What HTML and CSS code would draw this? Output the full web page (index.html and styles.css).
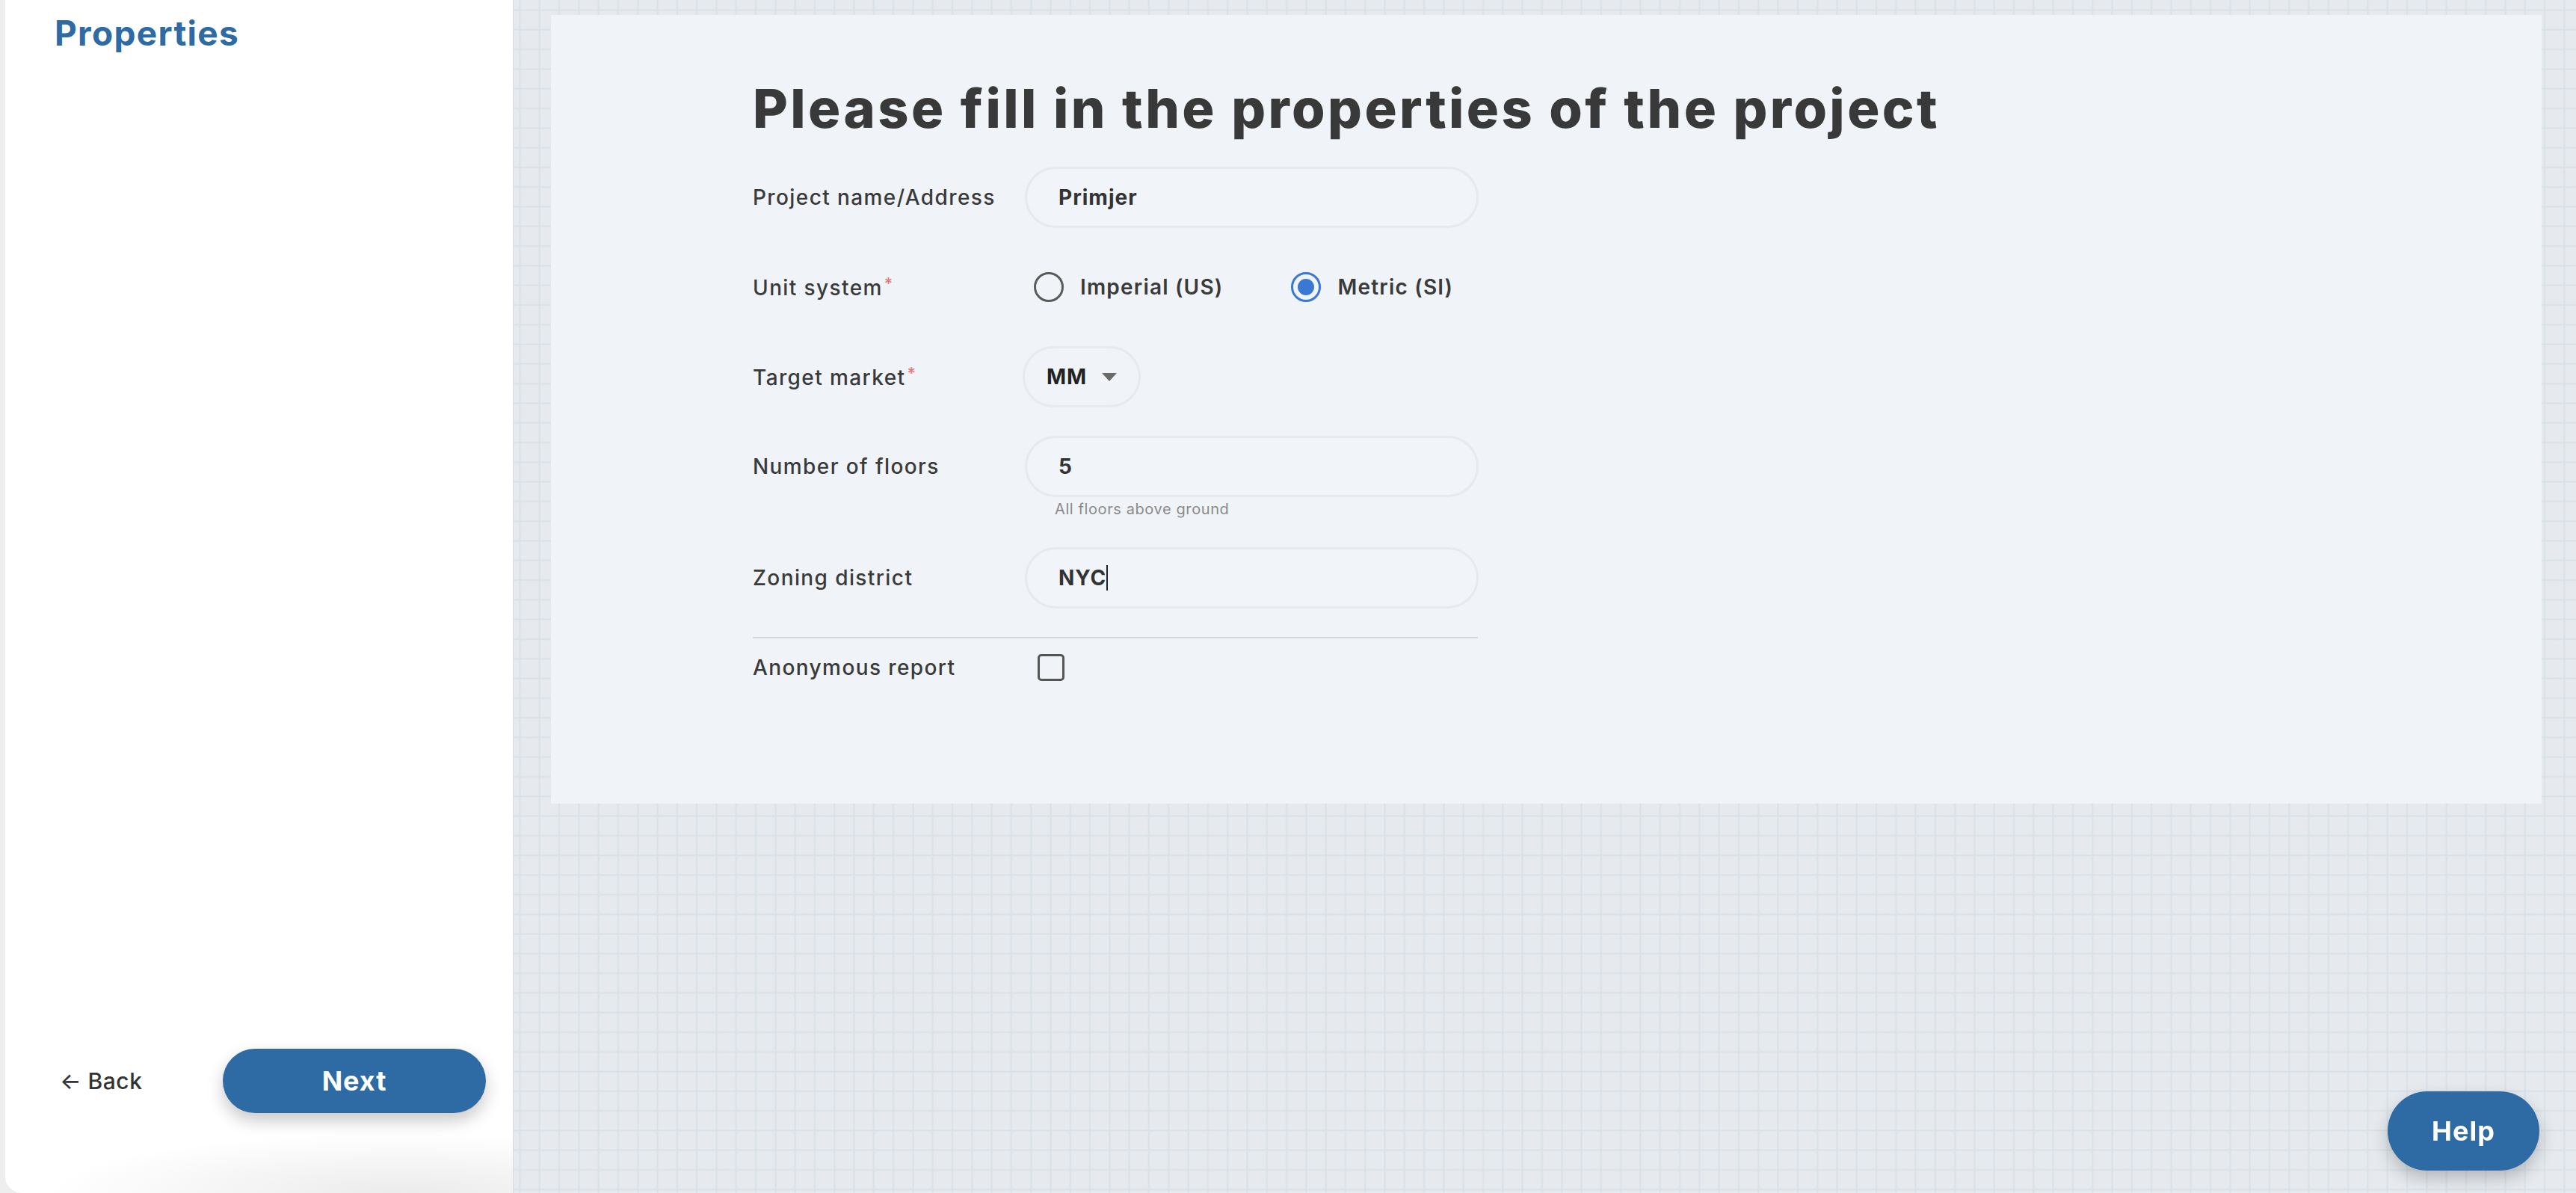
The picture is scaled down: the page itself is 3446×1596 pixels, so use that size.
FILE: index.html
```html
<!DOCTYPE html>
<html lang="en">
<head>
<meta charset="utf-8">
<title>Properties</title>
<link rel="stylesheet" href="styles.css">
</head>
<body>
<div class="app">
  <aside class="sidebar">
    <h2 class="side-title">Properties</h2>
    <div class="side-footer">
      <a class="back" href="#">&larr; Back</a>
      <button class="btn next" type="button">Next</button>
    </div>
  </aside>
  <main class="main">
    <section class="card">
      <div class="form">
        <h1 class="title">Please fill in the properties of the project</h1>

        <div class="row">
          <label class="label">Project name/Address</label>
          <div class="field"><div class="input">Primjer</div></div>
        </div>

        <div class="row">
          <label class="label">Unit system<span class="req">*</span></label>
          <div class="field radios">
            <span class="radio-opt"><span class="radio"></span>Imperial (US)</span>
            <span class="radio-opt"><span class="radio checked"></span>Metric (SI)</span>
          </div>
        </div>

        <div class="row">
          <label class="label">Target market<span class="req">*</span></label>
          <div class="field"><div class="select">MM<span class="caret"></span></div></div>
        </div>

        <div class="row row-help">
          <label class="label">Number of floors</label>
          <div class="field">
            <div class="input">5</div>
            <div class="help-text">All floors above ground</div>
          </div>
        </div>

        <div class="row">
          <label class="label">Zoning district</label>
          <div class="field"><div class="input">NYC<span class="cursor"></span></div></div>
        </div>

        <hr class="divider">

        <div class="row row-check">
          <label class="label">Anonymous report</label>
          <div class="field"><span class="checkbox"></span></div>
        </div>
      </div>
    </section>
  </main>
  <button class="btn help" type="button">Help</button>
</div>
</body>
</html>
```

FILE: styles.css
```css
* { box-sizing: border-box; }

html, body {
  margin: 0;
  height: 100%;
}

body {
  background: #eeeeee;
  font-family: "Inter", "Noto Sans", sans-serif;
  color: #3a3a3a;
  overflow: hidden;
}

.app {
  display: flex;
  height: 1596px;
}

.sidebar {
  width: 679px;
  margin-left: 7px;
  background-color: #ffffff;
  background-image: radial-gradient(70% 80px at 78% 100%, rgba(0, 0, 0, 0.08), rgba(0, 0, 0, 0) 100%);
  border-bottom-left-radius: 22px;
  display: flex;
  flex-direction: column;
  justify-content: space-between;
  padding: 0 0 107px 66px;
  flex-shrink: 0;
}

.side-title {
  margin: 0;
  padding-top: 16px;
  font-size: 46px;
  font-weight: 700;
  letter-spacing: 1.3px;
  color: #2e6aa4;
  line-height: 56px;
}

.side-footer {
  display: flex;
  align-items: center;
}

.back {
  width: 225px;
  padding-left: 7px;
  font-size: 30px;
  font-weight: 500;
  letter-spacing: 0.5px;
  color: #333333;
  text-decoration: none;
}

.btn {
  border: 0;
  background: #2e6aa4;
  color: #ffffff;
  font-family: "Inter", "Noto Sans", sans-serif;
  font-weight: 700;
  font-size: 36px;
  letter-spacing: 1px;
  box-shadow: 0 10px 22px rgba(0, 0, 0, 0.22);
}

.next {
  width: 352px;
  height: 86px;
  border-radius: 43px;
}

.main {
  flex: 1;
  padding: 20px 46px 0 50px;
  background-color: #e6eaee;
  background-image:
    linear-gradient(to right, rgba(214, 223, 233, 0) 0, #d8e0e8 1px, #d8e0e8 2px, rgba(214, 223, 233, 0) 3px),
    linear-gradient(to bottom, rgba(214, 223, 233, 0) 0, #d8e0e8 1px, #d8e0e8 2px, rgba(214, 223, 233, 0) 3px);
  background-size: 26.3px 26.3px;
  background-position: 7px 12px;
  border-left: 1px solid #d8dce0;
}

.card {
  height: 1055px;
  background: #f0f4f9;
  padding: 81px 0 0 270px;
}

.form {
  width: 970px;
}

.title {
  margin: 0 0 35px;
  font-size: 72px;
  font-weight: 800;
  letter-spacing: 3.4px;
  line-height: 87px;
  color: #393939;
  white-space: nowrap;
}

.row {
  display: flex;
  align-items: center;
  margin-bottom: 38px;
}

.row-help {
  align-items: flex-start;
}

.row-help .label {
  height: 82px;
  display: flex;
  align-items: center;
}

.label {
  width: 364px;
  flex-shrink: 0;
  font-size: 28px;
  font-weight: 500;
  letter-spacing: 1.4px;
  color: #3a3a3a;
  white-space: nowrap;
}

.req {
  color: #e8777d;
  font-size: 22px;
  vertical-align: 8px;
  margin-left: 2px;
}

.field {
  display: flex;
  flex-direction: column;
}

.input {
  width: 607px;
  height: 82px;
  border: 3px solid #e6e9ee;
  border-radius: 41px;
  background: #f1f4f9;
  display: flex;
  align-items: center;
  padding-left: 42px;
  font-size: 28px;
  font-weight: 700;
  letter-spacing: 1px;
  color: #333333;
}

.cursor {
  display: inline-block;
  width: 2px;
  height: 34px;
  background: #222222;
}

.help-text {
  margin: 3px 0 0 40px;
  font-size: 20px;
  line-height: 26px;
  font-weight: 400;
  letter-spacing: 0.6px;
  color: #8a8a8a;
}

.radios {
  flex-direction: row;
  align-items: center;
  height: 82px;
  padding-left: 12px;
  white-space: nowrap;
}

.radio-opt {
  display: flex;
  align-items: center;
  font-size: 28px;
  font-weight: 600;
  letter-spacing: 1.2px;
  color: #3a3a3a;
  margin-right: 91px;
  white-space: nowrap;
}

.radio {
  width: 40px;
  height: 40px;
  border: 3px solid #5a5a5a;
  border-radius: 50%;
  margin-right: 22px;
  display: flex;
  align-items: center;
  justify-content: center;
  flex-shrink: 0;
}

.radio.checked {
  border-color: #3a78d3;
}

.radio.checked::after {
  content: "";
  width: 22px;
  height: 22px;
  border-radius: 50%;
  background: #3a78d3;
}

.select {
  width: 158px;
  height: 82px;
  border: 3px solid #e6e9ee;
  border-radius: 41px;
  display: flex;
  align-items: center;
  padding-left: 29px;
  font-size: 28px;
  font-weight: 700;
  letter-spacing: 1px;
  color: #222222;
  margin-left: -3px;
}

.caret {
  width: 0;
  height: 0;
  border-left: 10px solid transparent;
  border-right: 10px solid transparent;
  border-top: 11px solid #6a6a6a;
  margin-left: 20px;
}

.divider {
  border: 0;
  height: 2px;
  background: #d3d6da;
  margin: 0 0 19px;
  width: 970px;
}

.row-check .label {
  line-height: 40px;
}

.checkbox {
  display: block;
  width: 36px;
  height: 36px;
  border: 3px solid #555555;
  border-radius: 5px;
  margin-left: 17px;
}

.help {
  position: fixed;
  right: 49px;
  bottom: 30px;
  width: 203px;
  height: 106px;
  border-radius: 53px;
}
```
